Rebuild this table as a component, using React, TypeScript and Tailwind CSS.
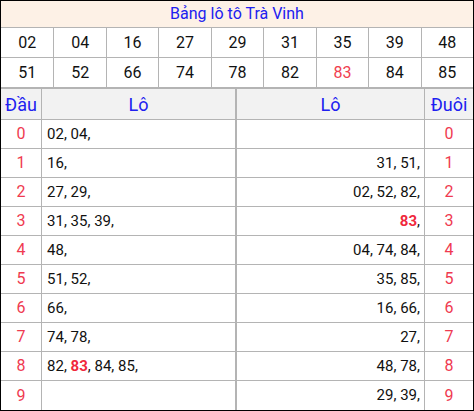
import React from "react";

const top1 = ["02", "04", "16", "27", "29", "31", "35", "39", "48"];
const top2 = ["51", "52", "66", "74", "78", "82", "83", "84", "85"];

type Item = { v: string; hot?: boolean };
const dau: Item[][] = [
  [{ v: "02" }, { v: "04" }],
  [{ v: "16" }],
  [{ v: "27" }, { v: "29" }],
  [{ v: "31" }, { v: "35" }, { v: "39" }],
  [{ v: "48" }],
  [{ v: "51" }, { v: "52" }],
  [{ v: "66" }],
  [{ v: "74" }, { v: "78" }],
  [{ v: "82" }, { v: "83", hot: true }, { v: "84" }, { v: "85" }],
  [],
];
const duoi: Item[][] = [
  [],
  [{ v: "31" }, { v: "51" }],
  [{ v: "02" }, { v: "52" }, { v: "82" }],
  [{ v: "83", hot: true }],
  [{ v: "04" }, { v: "74" }, { v: "84" }],
  [{ v: "35" }, { v: "85" }],
  [{ v: "16" }, { v: "66" }],
  [{ v: "27" }],
  [{ v: "48" }, { v: "78" }],
  [{ v: "29" }, { v: "39" }],
];

function List({ items }: { items: Item[] }) {
  return (
    <span className="whitespace-pre">
      {items.map((it, i) => (
        <React.Fragment key={i}>
          {i > 0 ? " " : ""}
          {it.hot ? <span className="font-bold text-[#f0283c]">{it.v}</span> : it.v},
        </React.Fragment>
      ))}
    </span>
  );
}

export default function App() {
  return (
    <div
      className="w-[474px] h-[411px] border border-black bg-white text-[#111] overflow-hidden"
      style={{ fontFamily: "Roboto, 'Liberation Sans', sans-serif" }}
    >
      <div className="h-[27px] bg-[#fdf1e6] border-b border-[#b4b4b4] flex items-center justify-center text-[16px] text-[#2020f0]">
        Bảng lô tô Trà Vinh
      </div>
      {[top1, top2].map((row, r) => (
        <div key={r} className="grid grid-cols-9 h-[30px] border-b border-[#b4b4b4]">
          {row.map((n, i) => (
            <div
              key={i}
              className={`flex items-center justify-center text-[16px] ${i > 0 ? "border-l border-[#b4b4b4]" : ""} ${n === "83" && r === 1 ? "text-[#f0404f]" : ""}`}
            >
              {n}
            </div>
          ))}
        </div>
      ))}
      <div className="flex h-[32px] border-t border-b border-[#b4b4b4] bg-[#f2f2f2] text-[18px] text-[#2020f0]">
        <div className="w-[40px] flex items-center justify-center">Đầu</div>
        <div className="w-[194px] border-l border-[#b4b4b4] flex items-center justify-center">Lô</div>
        <div className="flex-1 border-l-2 border-[#b4b4b4] flex items-center justify-center">Lô</div>
        <div className="w-[49px] border-l border-[#b4b4b4] flex items-center justify-center">Đuôi</div>
      </div>
      {dau.map((items, i) => (
        <div key={i} className={`flex h-[29px] text-[15px] ${i < 9 ? "border-b border-[#b4b4b4]" : ""}`}>
          <div className="w-[40px] flex items-center justify-center text-[#ef3a50] text-[16px]">{i}</div>
          <div className="w-[194px] border-l border-[#b4b4b4] flex items-center pl-[5px]">
            <List items={items} />
          </div>
          <div className="flex-1 border-l-2 border-[#b4b4b4] flex items-center justify-end pr-[4px]">
            <List items={duoi[i]} />
          </div>
          <div className="w-[49px] border-l border-[#b4b4b4] flex items-center justify-center text-[#ef3a50] text-[16px]">{i}</div>
        </div>
      ))}
    </div>
  );
}
